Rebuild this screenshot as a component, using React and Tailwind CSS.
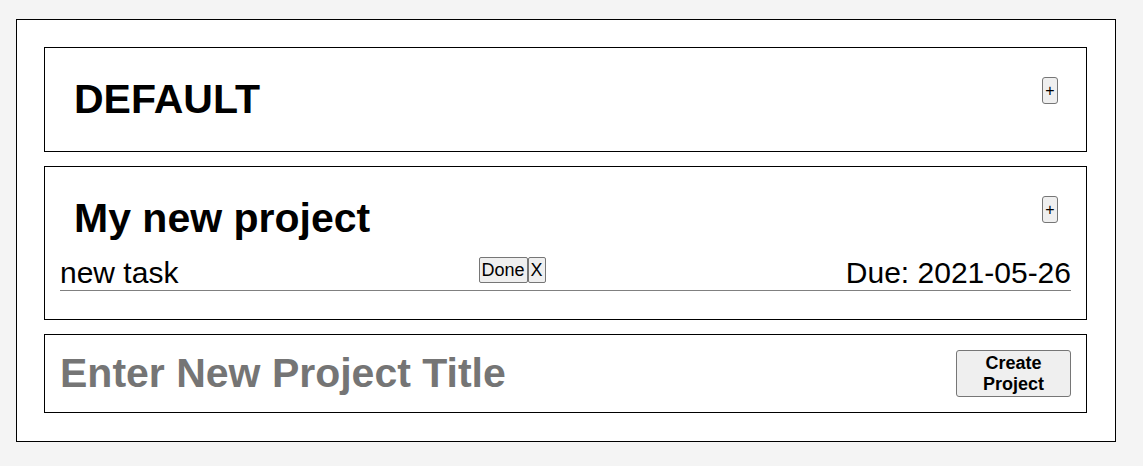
import React, { useState } from 'react';

const projects = [
  { id: 1, title: 'DEFAULT', tasks: [] },
  {
    id: 2,
    title: 'My new project',
    tasks: [{ id: 1, name: 'new task', due: '2021-05-26' }],
  },
];

function Project({ project }) {
  return (
    <div className="border border-black bg-white p-[15px]">
      <div className="flex justify-between items-start pl-[14px] pr-[13px] pt-[14px] pb-[14px]">
        <h1 className="text-[41px] leading-[45px] font-bold text-black">{project.title}</h1>
        <button className="w-[16px] h-[27px] text-[16px] leading-none bg-[#efefef] border border-[#767676] rounded-[3px] text-black">
          +
        </button>
      </div>
      {project.tasks.length > 0 && (
        <ul className="mb-[13px]">
          {project.tasks.map((task) => (
            <li
              key={task.id}
              className="flex justify-between items-start h-[36px] border-b border-[#808080] text-[30px] leading-[35px] text-black"
            >
              <span>{task.name}</span>
              <div className="flex mt-[2px]">
                <button className="h-[26px] px-[2px] text-[18px] leading-[22px] bg-[#efefef] border border-[#767676] rounded-[2px]">
                  Done
                </button>
                <button className="h-[26px] px-[2px] text-[18px] leading-[22px] bg-[#efefef] border border-[#767676] rounded-[2px]">
                  X
                </button>
              </div>
              <span>Due: {task.due}</span>
            </li>
          ))}
        </ul>
      )}
    </div>
  );
}

export default function App() {
  const [title, setTitle] = useState('');

  return (
    <div className="min-h-screen bg-[#f4f4f4] pt-[19px] pl-[16px] font-['Liberation_Sans',Arial,sans-serif]">
      <div className="w-[1100px] border border-black bg-white pl-[27px] pr-[28px] pt-[27px] pb-[28px] flex flex-col gap-[14px]">
        {projects.map((p) => (
          <Project key={p.id} project={p} />
        ))}
        <div className="border border-black bg-white p-[15px] flex items-center justify-between">
          <input
            value={title}
            onChange={(e) => setTitle(e.target.value)}
            placeholder="Enter New Project Title"
            className="flex-1 h-[46px] bg-transparent outline-none text-[41px] font-bold text-black placeholder:text-[#757575]"
          />
          <button className="w-[115px] h-[47px] text-[18px] leading-[21px] font-bold bg-[#efefef] border border-[#767676] rounded-[3px] text-black">
            Create
            <br />
            Project
          </button>
        </div>
      </div>
    </div>
  );
}
